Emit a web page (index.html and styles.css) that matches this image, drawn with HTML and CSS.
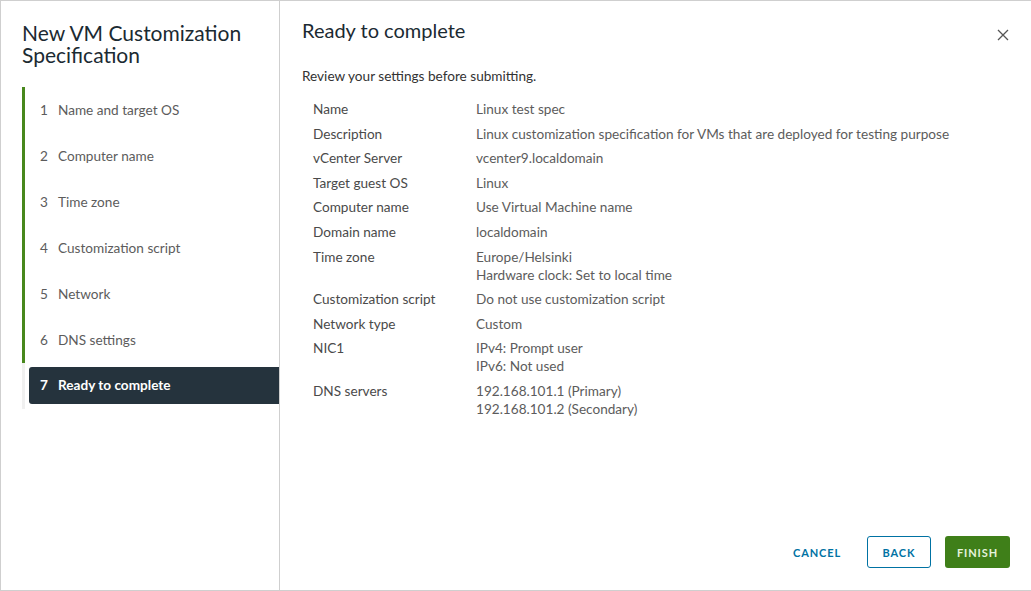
FILE: index.html
```html
<!DOCTYPE html>
<html lang="en">
<head>
    <meta charset="UTF-8">
    <meta name="viewport" content="width=device-width, initial-scale=1.0">
    <title>New VM Customization Specification</title>
    <link rel="stylesheet" href="styles.css">
</head>
<body>
    <div class="wizard">
        <div class="sidebar">
            <h1>New VM Customization Specification</h1>
            <ul class="steps">
                <li class="step done"><span class="num">1</span>Name and target OS</li>
                <li class="step done"><span class="num">2</span>Computer name</li>
                <li class="step done"><span class="num">3</span>Time zone</li>
                <li class="step done"><span class="num">4</span>Customization script</li>
                <li class="step done"><span class="num">5</span>Network</li>
                <li class="step done"><span class="num">6</span>DNS settings</li>
                <li class="step current"><span class="label"><span class="num">7</span>Ready to complete</span></li>
            </ul>
        </div>
        <div class="content">
            <div class="header">
                <h2>Ready to complete</h2>
                <button class="close" aria-label="Close">
                    <svg width="12" height="12" viewBox="0 0 12 12">
                        <path d="M1 1 L11 11 M11 1 L1 11" stroke="#555" stroke-width="1.3" fill="none"/>
                    </svg>
                </button>
            </div>
            <p class="intro">Review your settings before submitting.</p>
            <div class="summary">
                <div class="row"><div class="key">Name</div><div class="val">Linux test spec</div></div>
                <div class="row"><div class="key">Description</div><div class="val">Linux customization specification for VMs that are deployed for testing purpose</div></div>
                <div class="row"><div class="key">vCenter Server</div><div class="val">vcenter9.localdomain</div></div>
                <div class="row"><div class="key">Target guest OS</div><div class="val">Linux</div></div>
                <div class="row"><div class="key">Computer name</div><div class="val">Use Virtual Machine name</div></div>
                <div class="row"><div class="key">Domain name</div><div class="val">localdomain</div></div>
                <div class="row"><div class="key">Time zone</div><div class="val">Europe/Helsinki<br>Hardware clock: Set to local time</div></div>
                <div class="row"><div class="key">Customization script</div><div class="val">Do not use customization script</div></div>
                <div class="row"><div class="key">Network type</div><div class="val">Custom</div></div>
                <div class="row"><div class="key">NIC1</div><div class="val">IPv4: Prompt user<br>IPv6: Not used</div></div>
                <div class="row"><div class="key">DNS servers</div><div class="val">192.168.101.1 (Primary)<br>192.168.101.2 (Secondary)</div></div>
            </div>
            <div class="footer">
                <button class="btn btn-link">Cancel</button>
                <button class="btn btn-outline">Back</button>
                <button class="btn btn-success">Finish</button>
            </div>
        </div>
    </div>
</body>
</html>
```

FILE: styles.css
```css
html, body {
    margin: 0;
    padding: 0;
    height: 100%;
}
body {
    font-family: Lato, "Noto Sans", sans-serif;
    background-color: #fff;
    color: #565656;
}
.wizard {
    display: flex;
    height: 591px;
    box-sizing: border-box;
    border: 1px solid #cfcfcf;
    border-right: none;
}
.sidebar {
    width: 279px;
    box-sizing: border-box;
    border-right: 1px solid #cfcfcf;
    padding: 21px 0 0 21px;
    flex-shrink: 0;
}
.sidebar h1 {
    margin: 0 0 21px 0;
    font-size: 21px;
    font-weight: 400;
    line-height: 22px;
    color: #1b2a32;
}
.steps {
    list-style: none;
    margin: 0;
    padding: 0;
}
.step {
    font-size: 13.6px;
    height: 46px;
    line-height: 46px;
    color: #5c5c5c;
}
.step .num {
    display: inline-block;
    width: 18px;
}
.step.done {
    border-left: 3px solid #48881d;
    padding-left: 15px;
}
.step.current {
    border-left: 3px solid #f0f0f0;
    padding: 4px 0 5px 4px;
    height: 37px;
}
.step.current .label {
    display: block;
    height: 37px;
    line-height: 37px;
    background-color: #25333d;
    color: #fff;
    font-weight: 700;
    border-radius: 3px 0 0 3px;
    padding-left: 11px;
}
.content {
    flex: 1;
    display: flex;
    flex-direction: column;
    padding: 17px 21px 22px 22px;
}
.header {
    display: flex;
    justify-content: space-between;
    align-items: flex-start;
}
.header h2 {
    margin: 0;
    font-size: 20px;
    font-weight: 400;
    line-height: 24px;
    color: #1b2a32;
}
.close {
    border: none;
    background: none;
    padding: 0;
    margin: 11px 1px 0 0;
    cursor: pointer;
}
.intro {
    margin: 23px 0 15px 0;
    font-size: 13.6px;
    line-height: 18px;
    color: #333;
}
.summary {
    padding-left: 11px;
    font-size: 13.6px;
    line-height: 18px;
}
.row {
    display: flex;
    margin-bottom: 6.6px;
}
.key {
    width: 163px;
    flex-shrink: 0;
    color: #4a4a4a;
}
.val {
    color: #5c5c5c;
}
.footer {
    margin-top: auto;
    display: flex;
    justify-content: flex-end;
    gap: 14px;
}
.btn {
    height: 32px;
    padding: 0 12px;
    font-family: Lato, "Noto Sans", sans-serif;
    font-size: 11px;
    font-weight: 700;
    letter-spacing: 0.08em;
    text-transform: uppercase;
    border-radius: 3px;
    cursor: pointer;
}
.btn-link {
    border: none;
    background: none;
    color: #0072a3;
}
.btn-outline {
    border: 1px solid #0072a3;
    background-color: #fff;
    color: #0072a3;
    width: 64px;
}
.btn-success {
    border: none;
    background-color: #3f7f19;
    color: #e6f3dc;
    width: 65px;
}
```
